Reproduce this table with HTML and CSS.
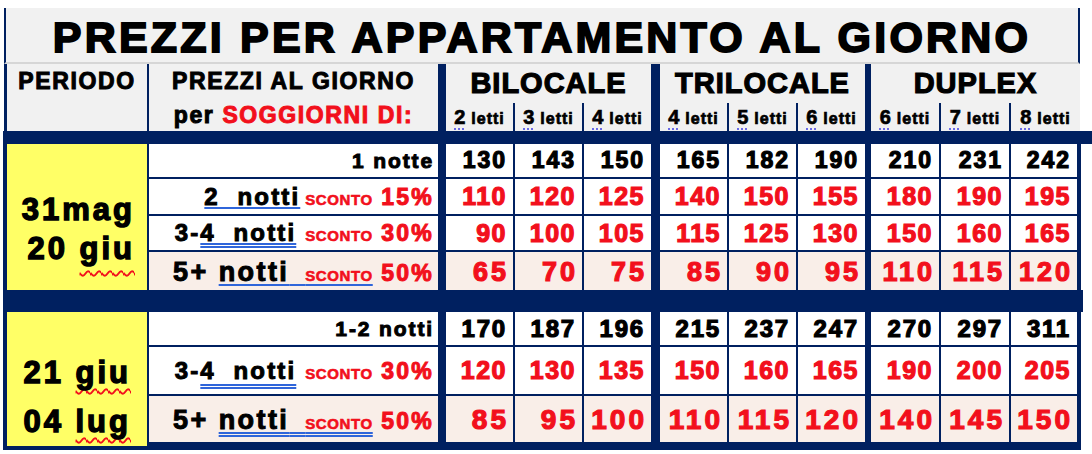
FILE: index.html
```html
<!DOCTYPE html>
<html lang="it">
<head>
<meta charset="utf-8">
<title>Prezzi per appartamento al giorno</title>
<link rel="stylesheet" href="styles.css">
</head>
<body>
<div class="page">
  <div class="title">PREZZI PER APPARTAMENTO AL GIORNO</div>

  <div class="head">
    <div class="h-period">PERIODO</div>
    <div class="h-prezzi">PREZZI AL GIORNO<br>per <span class="red">SOGGIORNI DI:</span></div>
    <div class="h-group g1">
      <div class="h-gname">BILOCALE</div>
      <div class="h-subs">
        <div class="h-sub"><span class="d">2</span> letti</div>
        <div class="h-sub"><span class="d">3</span> letti</div>
        <div class="h-sub"><span class="d">4</span> letti</div>
      </div>
    </div>
    <div class="h-group g2">
      <div class="h-gname">TRILOCALE</div>
      <div class="h-subs">
        <div class="h-sub"><span class="d">4</span> letti</div>
        <div class="h-sub"><span class="d">5</span> letti</div>
        <div class="h-sub"><span class="d">6</span> letti</div>
      </div>
    </div>
    <div class="h-group g3">
      <div class="h-gname">DUPLEX</div>
      <div class="h-subs">
        <div class="h-sub"><span class="d">6</span> letti</div>
        <div class="h-sub"><span class="d">7</span> letti</div>
        <div class="h-sub"><span class="d">8</span> letti</div>
      </div>
    </div>
  </div>

  <div class="band-top"></div>

  <section class="sec">
    <div class="period p1">
      <div>31mag</div>
      <div><span>20 </span><span class="wv wv1">giu</span></div>
    </div>
    <div class="rows">
      <div class="row ra">
        <div class="lab">1 notte</div>
        <div class="c">130</div><div class="c">143</div><div class="c">150</div>
        <div class="c">165</div><div class="c">182</div><div class="c">190</div>
        <div class="c">210</div><div class="c">231</div><div class="c">242</div>
      </div>
      <div class="row rb rd h35">
        <div class="lab"><span class="u us">2  notti</span><span class="sc sc1">SCONTO</span><span class="pc"> 15%</span></div>
        <div class="c">110</div><div class="c">120</div><div class="c">125</div>
        <div class="c">140</div><div class="c">150</div><div class="c">155</div>
        <div class="c">180</div><div class="c">190</div><div class="c">195</div>
      </div>
      <div class="row rb rd h34">
        <div class="lab">3-<span class="u ud">4  notti</span><span class="sc sc2">SCONTO</span><span class="pc"> 30%</span></div>
        <div class="c">90</div><div class="c">100</div><div class="c">105</div>
        <div class="c">115</div><div class="c">125</div><div class="c">130</div>
        <div class="c">150</div><div class="c">160</div><div class="c">165</div>
      </div>
      <div class="row rc rd pk h38">
        <div class="lab">5+ <span class="u us4">notti<span class="gap">  </span><span class="sc">SCONTO</span></span><span class="pc"> 50%</span></div>
        <div class="c">65</div><div class="c">70</div><div class="c">75</div>
        <div class="c">85</div><div class="c">90</div><div class="c">95</div>
        <div class="c">110</div><div class="c">115</div><div class="c">120</div>
      </div>
    </div>
  </section>

  <div class="band-mid"></div>

  <section class="sec sec2">
    <div class="period p2">
      <div><span>21 </span><span class="wv wv2">giu</span></div>
      <div><span>04 </span><span class="wv wv2">lug</span></div>
    </div>
    <div class="rows">
      <div class="row ra ra2">
        <div class="lab">1-2 notti</div>
        <div class="c">170</div><div class="c">187</div><div class="c">196</div>
        <div class="c">215</div><div class="c">237</div><div class="c">247</div>
        <div class="c">270</div><div class="c">297</div><div class="c">311</div>
      </div>
      <div class="row rb rd h47">
        <div class="lab">3-<span class="u ud ud2">4  notti</span><span class="sc sc2">SCONTO</span><span class="pc"> 30%</span></div>
        <div class="c">120</div><div class="c">130</div><div class="c">135</div>
        <div class="c">150</div><div class="c">160</div><div class="c">165</div>
        <div class="c">190</div><div class="c">200</div><div class="c">205</div>
      </div>
      <div class="row rc rc2 rd pk h46">
        <div class="lab">5+ <span class="u ud ud3">notti<span class="gap">  </span><span class="sc">SCONTO</span></span><span class="pc"> 50%</span></div>
        <div class="c">85</div><div class="c">95</div><div class="c">100</div>
        <div class="c">110</div><div class="c">115</div><div class="c">120</div>
        <div class="c">140</div><div class="c">145</div><div class="c">150</div>
      </div>
    </div>
  </section>
</div>
</body>
</html>
```

FILE: styles.css
```css
body {
  margin: 0;
  background: #ffffff;
  font-family: "Liberation Sans", Arial, sans-serif;
  font-weight: 700;
  color: #000;
}

.page {
  width: 1092px;
  padding-top: 8px;
  -webkit-text-stroke: 1px;
}

.red { color: #f2101c; }

/* ---------- title ---------- */
.title {
  margin-left: 4px;
  width: 1076px;
  height: 56px;
  box-sizing: border-box;
  padding-top: 4px;
  border-left: 2px solid #002060;
  border-right: 2px solid #002060;
  border-bottom: 2px solid #d6d6d6;
  background: #f1f1f1;
  text-align: center;
  font-size: 43px;
  line-height: 50px;
  letter-spacing: 3.2px;
  -webkit-text-stroke: 1.8px;
  white-space: nowrap;
}

/* ---------- header ---------- */
.head {
  display: flex;
  margin-left: 4px;
  width: 1076px;
  height: 67px;
  box-sizing: border-box;
  border-left: 3px solid #002060;
  background: #002060;
}

.h-period,
.h-prezzi {
  background: #f1f1f1;
  text-align: center;
  font-size: 23px;
  line-height: 34px;
  letter-spacing: 1.6px;
  white-space: nowrap;
}
.h-period { width: 140px; }
.h-prezzi { width: 289px; margin-left: 2px; }

.h-group {
  display: flex;
  flex-direction: column;
  width: 205px;
}
.g1 { margin-left: 8px; }
.g2 { margin-left: 9px; }
.g3 { margin-left: 6px; width: 209px; }

.h-gname {
  height: 39px;
  background: #f1f1f1;
  text-align: center;
  font-size: 29px;
  line-height: 39px;
  letter-spacing: 1px;
  -webkit-text-stroke: 1.2px;
}

.h-subs {
  display: flex;
  gap: 2px;
  height: 28px;
}
.h-sub {
  flex: 0 0 67px;
  background: #f1f1f1;
  text-align: center;
  font-size: 16px;
  line-height: 28px;
  letter-spacing: 1px;
  white-space: nowrap;
  -webkit-text-stroke: 0.7px;
}
.g3 .h-sub { flex-basis: 68px; }
.g3 .h-sub:last-child { flex-basis: 69px; }
.h-sub .d {
  font-size: 20px;
  letter-spacing: 0.5px;
  text-decoration: underline dotted #6a6ae8;
  text-decoration-thickness: 2px;
  text-underline-offset: 4px;
}

/* ---------- bands ---------- */
.band-top {
  margin-left: 3px;
  width: 1089px;
  height: 13px;
  background: #002060;
}
.band-mid {
  margin-left: 3px;
  width: 1080px;
  height: 22px;
  background: #002060;
}

/* ---------- sections ---------- */
.sec {
  display: flex;
  gap: 2px;
  margin-left: 3px;
  width: 1078px;
  box-sizing: border-box;
  border-left: 4px solid #002060;
  border-right: 4px solid #002060;
  background: #002060;
}
.sec2 { border-bottom: 4px solid #002060; }

.period {
  flex: 0 0 140px;
  box-sizing: border-box;
  background: #ffff66;
  text-align: right;
  font-size: 31px;
  letter-spacing: 3px;
  white-space: nowrap;
  -webkit-text-stroke: 1.4px;
}
.p1 { padding: 46px 12px 0 0; line-height: 39px; }
.p2 { padding: 36px 16px 0 0; line-height: 49px; }

.wv {
  text-decoration: underline wavy #f2101c;
  text-decoration-thickness: 1.5px;
  text-decoration-skip-ink: none;
}
.wv1 { text-underline-offset: 11px; }
.wv2 { text-underline-offset: 5px; }

.rows {
  display: flex;
  flex-direction: column;
  gap: 2px;
}

.row {
  display: flex;
  height: 33px;
}
.h34 { height: 34px; }
.h35 { height: 35px; }
.h38 { height: 38px; }
.h46 { height: 46px; }
.h47 { height: 47px; }

.lab {
  width: 289px;
  box-sizing: border-box;
  padding-right: 4px;
  background: #ffffff;
  text-align: right;
  white-space: pre;
  letter-spacing: 0.09em;
}
.lab span { line-height: 1; }

.c {
  width: 67px;
  box-sizing: border-box;
  margin-left: 2px;
  padding-right: 6px;
  background: #ffffff;
  text-align: right;
  white-space: nowrap;
  -webkit-text-stroke: 1.2px;
}
.c:nth-child(2) { margin-left: 8px; }
.c:nth-child(5) { margin-left: 9px; }
.c:nth-child(8) { margin-left: 6px; width: 68px; }
.c:nth-child(9) { width: 68px; }
.c:nth-child(10) { width: 66px; }

.pk > .lab,
.pk > .c { background: #f9eee8; }

.rd .c { color: #f2101c; }
.sc,
.pc { color: #f2101c; }

.sc { font-size: 15px; letter-spacing: 0.6px; -webkit-text-stroke: 0.6px; }
.sc1 { margin-left: 5px; }
.sc2 { margin-left: 9px; }
.pc { font-size: 23px; letter-spacing: 2.2px; }

.gap { font-size: 20px; }

.u {
  text-decoration-line: underline;
  text-decoration-color: #2f65da;
  text-decoration-skip-ink: none;
}
.us { text-decoration-style: solid; text-decoration-thickness: 2px; text-underline-offset: 2px; }
.us4 { text-decoration-style: solid; text-decoration-thickness: 2px; text-underline-offset: 3px; }
.ud { text-decoration-style: double; text-decoration-thickness: 1.5px; text-underline-offset: 2px; }
.ud2 { text-underline-offset: 5px; }
.ud3 { text-underline-offset: 3px; }

/* row type A: first price row (black) */
.ra .lab { font-size: 21px; line-height: 33px; }
.ra .c { font-size: 23px; line-height: 33px; letter-spacing: 2px; }
.ra2 .c { font-size: 24px; letter-spacing: 1.8px; }

/* row type B: discounted rows */
.rb .lab { font-size: 24px; }
.rb .c { font-size: 25px; letter-spacing: 1.5px; }
.h34 .lab, .h34 .c { line-height: 34px; }
.h35 .lab, .h35 .c { line-height: 35px; }
.h47 .lab, .h47 .c { line-height: 47px; }

/* row type C: 5+ nights */
.rc .lab { font-size: 27px; line-height: 41px; }
.rc .c { font-size: 27px; line-height: 41px; letter-spacing: 3px; padding-right: 4px; }
.rc2 .lab { line-height: 48px; }
.rc2 .c { font-size: 28px; line-height: 48px; }
```
